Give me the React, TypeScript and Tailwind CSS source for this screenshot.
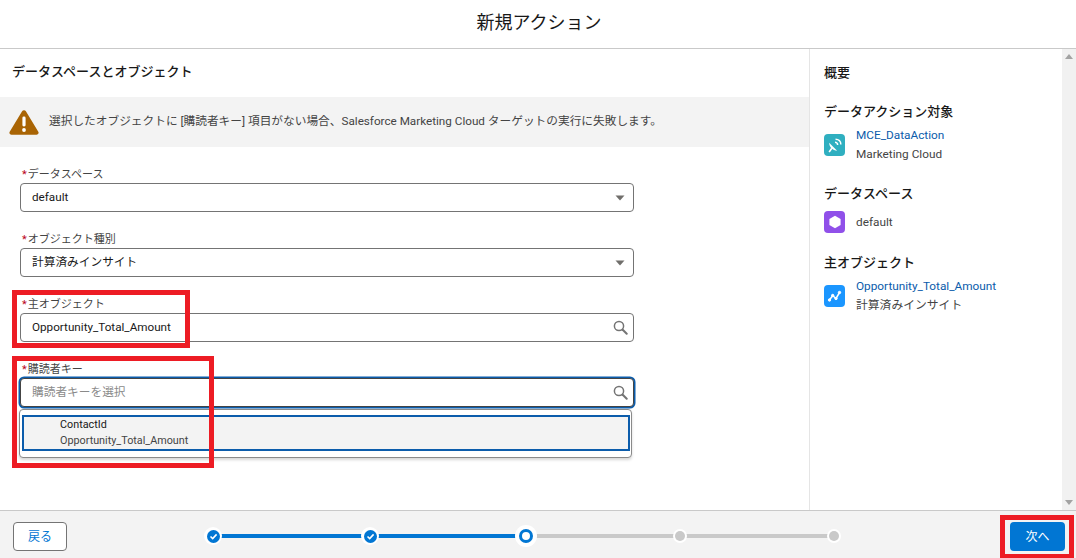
import { ReactNode } from "react";

const fontStack = "font-['Roboto','Noto_Sans_CJK_JP',sans-serif]";

function Caret() {
  return (
    <svg width="10" height="6" viewBox="0 0 10 6" className="shrink-0">
      <path d="M0.5 0.5h9L5 5.5z" fill="#706e6b" />
    </svg>
  );
}

function SearchIcon() {
  return (
    <svg width="15" height="15" viewBox="0 0 15 15" fill="none" stroke="#747474" className="shrink-0">
      <circle cx="6" cy="6" r="4.6" strokeWidth="1.5" />
      <path d="M9.5 9.5 13.7 13.7" strokeWidth="2" strokeLinecap="round" />
    </svg>
  );
}

function Field({ label, children }: { label: string; children: ReactNode }) {
  return (
    <div className="w-[614px]">
      <div className="h-[20px] pl-[2px] text-[11px] leading-[23px] text-[#444444]">
        <span className="mr-[1px] text-[#ba0517]">*</span>
        {label}
      </div>
      {children}
    </div>
  );
}

function SelectBox({ value }: { value: string }) {
  return (
    <div className="flex h-[29px] items-center justify-between rounded-[4px] border border-[#747474] bg-white pl-[11px] pr-[8px] text-[11.7px] text-[#181818]">
      <span>{value}</span>
      <Caret />
    </div>
  );
}

function SummaryItem({ title, icon, link, sub, rowClass }: { title: string; icon: ReactNode; link?: string; sub: string; rowClass: string }) {
  return (
    <div>
      <div className="text-[13px] font-medium leading-[20px] text-[#181818]">{title}</div>
      <div className={`flex items-center gap-[11px] ${rowClass}`}>
        <div className="flex h-[22px] w-[21px] shrink-0 items-center justify-center rounded-[4px]">{icon}</div>
        <div className="text-[11.8px] leading-[19px]">
          {link && <div className="text-[#0b5cab]">{link}</div>}
          <div className="text-[#444444]">{sub}</div>
        </div>
      </div>
    </div>
  );
}

function DoneStep() {
  return (
    <div className="z-10 flex h-[18px] w-[18px] shrink-0 items-center justify-center rounded-full bg-white">
      <div className="flex h-[13px] w-[13px] items-center justify-center rounded-full bg-[#0176d3]">
        <svg width="9" height="9" viewBox="0 0 9 9" fill="none" stroke="white" strokeWidth="1.6">
          <path d="M1.5 4.5 3.7 6.6 7.6 2.4" />
        </svg>
      </div>
    </div>
  );
}

function TodoStep() {
  return (
    <div className="z-10 flex h-[14px] w-[14px] shrink-0 items-center justify-center rounded-full bg-white">
      <div className="h-[10px] w-[10px] rounded-full bg-[#c9c9c9]" />
    </div>
  );
}

export default function App() {
  return (
    <div className={`flex h-[558px] w-[1076px] flex-col overflow-hidden bg-white ${fontStack}`}>
      <header className="flex h-[49px] shrink-0 items-center justify-center border-b border-[#c9c9c9] pb-[4px] text-[18px] text-[#181818]">
        <span className="ml-[2px]">新規アクション</span>
      </header>

      <div className="flex min-h-0 flex-1">
        <main className="relative w-[810px] shrink-0 border-r border-[#e5e5e5]">
          <h2 className="pl-[12px] pt-[13px] text-[13px] font-medium leading-[20px] text-[#181818]">データスペースとオブジェクト</h2>

          <div className="mt-[15px] flex h-[50px] items-center gap-[10px] bg-[#f3f3f3] pl-[9px] text-[11.7px] text-[#444444]">
            <svg width="30" height="26" viewBox="0 0 30 26" className="shrink-0">
              <path d="M15 1.2c.8 0 1.5.4 1.9 1.1l12.4 20.5c.8 1.4-.1 3-1.8 3H2.500c-1.700 0-2.600-1.600-1.800-3L13.100 2.300c.4-.7 1.100-1.100 1.900-1.100z" fill="#a96404" />
              <rect x="13.400" y="7.500" width="3.200" height="10" rx="1.400" fill="white" />
              <circle cx="15" cy="21" r="1.900" fill="white" />
            </svg>
            <span>選択したオブジェクトに [購読者キー] 項目がない場合、Salesforce Marketing Cloud ターゲットの実行に失敗します。</span>
          </div>

          <div className="flex flex-col gap-[16px] pl-[20px] pt-[16px]">
            <Field label="データスペース">
              <SelectBox value="default" />
            </Field>
            <Field label="オブジェクト種別">
              <SelectBox value="計算済みインサイト" />
            </Field>
            <Field label="主オブジェクト">
              <div className="flex h-[29px] items-center justify-between rounded-[4px] border border-[#747474] bg-white pl-[11px] pr-[5px] text-[11.7px] text-[#181818]">
                <span>Opportunity_Total_Amount</span>
                <SearchIcon />
              </div>
            </Field>
            <Field label="購読者キー">
              <div className="flex h-[29px] items-center justify-between rounded-[4px] border border-[#444444] bg-white pl-[11px] pr-[5px] text-[11.7px] text-[#8a8a8a] shadow-[0_0_0_1.5px_#0b5cab]">
                <span>購読者キーを選択</span>
                <SearchIcon />
              </div>
              <div className="-ml-[1px] mt-[2px] h-[49px] w-[613px] rounded-[4px] border border-[#8a8a8a] bg-white px-[2px] pt-[5px] shadow-[0_2px_3px_rgba(0,0,0,0.16)]">
                <div className="h-[36px] w-[608px] border-2 border-[#0b5cab] bg-[#f3f3f3] pl-[36px] text-[10.8px] leading-[16px] text-[#181818]">
                  <div>ContactId</div>
                  <div className="text-[#444444]">Opportunity_Total_Amount</div>
                </div>
              </div>
            </Field>
          </div>

          <div className="absolute left-[12px] top-[241px] h-[58px] w-[178px] border-[5px] border-[#ed1c24]" />
          <div className="absolute left-[12px] top-[307px] h-[112px] w-[202px] border-[5px] border-[#ed1c24]" />
        </main>

        <aside className="flex w-[252px] shrink-0 flex-col pl-[14px] pt-[14px]">
          <h2 className="text-[13px] font-medium leading-[20px] text-[#181818]">概要</h2>
          <div className="mt-[19px] flex flex-col gap-[20px]">
            <SummaryItem
              title="データアクション対象"
              link="MCE_DataAction"
              sub="Marketing Cloud"
              rowClass="mt-[4px]"
              icon={
                <div className="flex h-[22px] w-[21px] items-center justify-center rounded-[4px] bg-[#2fafc0]">
                  <svg width="16" height="16" viewBox="0 0 15 15" fill="none" stroke="white">
                    <path d="M2 5.500c0 4 3.500 7.500 7.500 7.500z" fill="white" stroke="none" />
                    <path d="M2 14 4.500 10.500" strokeWidth="1.500" />
                    <path d="M7.500 5c1.300 0 2.500 1.200 2.500 2.500M8 2c2.900 0 5 2.100 5 5" strokeWidth="1.400" />
                  </svg>
                </div>
              }
            />
            <SummaryItem
              title="データスペース"
              sub="default"
              rowClass="mt-[7px]"
              icon={
                <div className="flex h-[22px] w-[21px] items-center justify-center rounded-[4px] bg-[#9050e9]">
                  <svg width="14" height="14" viewBox="0 0 14 14">
                    <path d="M7 .8 12.600 3.900v6.200L7 13.200 1.400 10.100V3.900z" fill="white" />
                  </svg>
                </div>
              }
            />
            <SummaryItem
              title="主オブジェクト"
              link="Opportunity_Total_Amount"
              sub="計算済みインサイト"
              rowClass="mt-[4px]"
              icon={
                <div className="flex h-[22px] w-[21px] items-center justify-center rounded-[4px] bg-[#1b96ff]">
                  <svg width="15" height="15" viewBox="0 0 15 15" fill="white" stroke="white">
                    <path d="M2.500 11 5.700 6.500 9 9.500 12.500 3.500" fill="none" strokeWidth="1.500" />
                    <circle cx="2.500" cy="11" r="1.200" />
                    <circle cx="5.700" cy="6.500" r="1.200" />
                    <circle cx="9" cy="9.500" r="1.200" />
                    <circle cx="12.500" cy="3.500" r="1.200" />
                  </svg>
                </div>
              }
            />
          </div>
        </aside>

        <div className="flex w-[14px] shrink-0 flex-col items-center justify-between bg-[#f1f1f1] py-[5px]">
          <svg width="8" height="5" viewBox="0 0 8 5"><path d="M4 0l4 5H0z" fill="#a3a3a3" /></svg>
          <svg width="8" height="5" viewBox="0 0 8 5"><path d="M0 0h8L4 5z" fill="#a3a3a3" /></svg>
        </div>
      </div>

      <footer className="relative flex h-[48px] shrink-0 items-center border-t border-[#c9c9c9] bg-[#f3f3f3] pl-[13px] pr-[11px] pt-[4px]">
        <button className="h-[29px] w-[54px] rounded-[4px] border border-[#747474] bg-white text-[12px] text-[#0176d3]">戻る</button>

        <div className="-mt-[1px] ml-[137px] flex items-center">
          <DoneStep />
          <div className="-mx-[1px] h-[4px] w-[141px] bg-[#0176d3]" />
          <DoneStep />
          <div className="-mx-[1px] h-[4px] w-[138px] bg-[#0176d3]" />
          <div className="z-10 flex h-[22px] w-[22px] shrink-0 items-center justify-center rounded-full bg-white">
            <div className="h-[14px] w-[14px] rounded-full border-[3px] border-[#0176d3] bg-white" />
          </div>
          <div className="-mx-[1px] h-[4px] w-[138px] bg-[#c9c9c9]" />
          <TodoStep />
          <div className="-mx-[1px] h-[4px] w-[142px] bg-[#c9c9c9]" />
          <TodoStep />
        </div>

        <button className="ml-auto h-[29px] w-[55px] rounded-[4px] bg-[#0176d3] text-[12px] text-white">次へ</button>
        <div className="absolute left-[1000px] top-[4px] h-[44px] w-[74px] border-[5px] border-[#ed1c24]" />
      </footer>
    </div>
  );
}
